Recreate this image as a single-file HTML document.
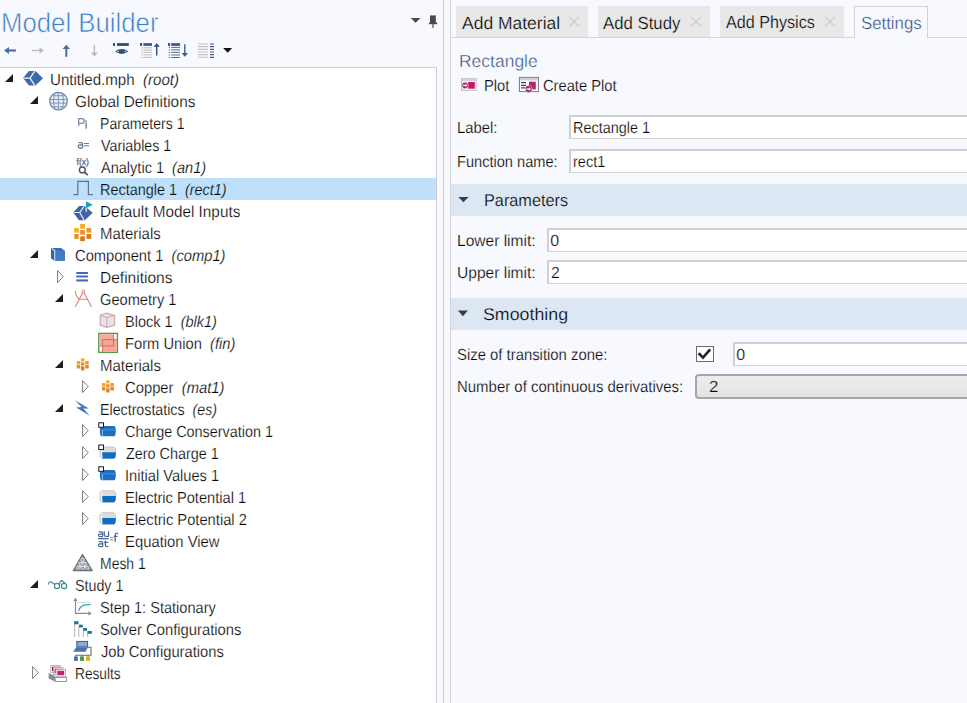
<!DOCTYPE html>
<html><head><meta charset="utf-8">
<style>
html,body{margin:0;padding:0;width:967px;height:703px;overflow:hidden;background:#f8f9fe;font-family:"Liberation Sans",sans-serif;color:#1e1e1e;}
.a{position:absolute;white-space:pre;}
.tx{position:absolute;white-space:pre;transform-origin:0 0;text-rendering:geometricPrecision;}
.tx i{font-style:italic;}
#left{position:absolute;left:0;top:0;width:443px;height:703px;background:#f8f9fe;}
#vl1{position:absolute;left:443px;top:0;width:1px;height:703px;background:#b6cde2;}
#vl2{position:absolute;left:450px;top:0;width:1px;height:703px;background:#d4d5dc;}
#tree{position:absolute;left:-1px;top:67px;width:436px;height:640px;background:#fff;border:1px solid #cdcdd1;}
.sel{position:absolute;left:0;width:436px;height:22px;background:#bfe0fb;}
.tab{position:absolute;top:6px;height:31px;background:#e8e8e8;}
#tabline{position:absolute;left:451px;top:37px;width:516px;height:1px;background:#d6d6da;}
.inp{position:absolute;background:#fff;border-top:2px solid #d0d0d2;border-left:2px solid #d0d0d2;border-bottom:1px solid #d4d4d6;box-sizing:border-box;}
.band{position:absolute;left:451px;width:516px;background:#dde6f3;}

</style></head><body>
<div id="left"></div>
<div id="tree"></div>
<div id="vl1"></div>
<div id="vl2"></div>
<div class="sel" style="top:178px"></div>
<svg style="position:absolute;left:0;top:0" width="967" height="703"><polygon points="5,82 13,74 13,82" fill="#1e1e1e"/><polygon points="30,104 38,96 38,104" fill="#1e1e1e"/><polygon points="30,258 38,250 38,258" fill="#1e1e1e"/><path d="M57.6 270.6 L63.2 276.6 L57.6 282.6 Z" fill="none" stroke="#7c7c7c" stroke-width="1"/><polygon points="55,302 63,294 63,302" fill="#1e1e1e"/><polygon points="55,368 63,360 63,368" fill="#1e1e1e"/><path d="M82.6 380.6 L88.2 386.6 L82.6 392.6 Z" fill="none" stroke="#7c7c7c" stroke-width="1"/><polygon points="55,412 63,404 63,412" fill="#1e1e1e"/><path d="M82.6 424.6 L88.2 430.6 L82.6 436.6 Z" fill="none" stroke="#7c7c7c" stroke-width="1"/><path d="M82.6 446.6 L88.2 452.6 L82.6 458.6 Z" fill="none" stroke="#7c7c7c" stroke-width="1"/><path d="M82.6 468.6 L88.2 474.6 L82.6 480.6 Z" fill="none" stroke="#7c7c7c" stroke-width="1"/><path d="M82.6 490.6 L88.2 496.6 L82.6 502.6 Z" fill="none" stroke="#7c7c7c" stroke-width="1"/><path d="M82.6 512.6 L88.2 518.6 L82.6 524.6 Z" fill="none" stroke="#7c7c7c" stroke-width="1"/><polygon points="30,588 38,580 38,588" fill="#1e1e1e"/><path d="M32.6 666.6 L38.2 672.6 L32.6 678.6 Z" fill="none" stroke="#7c7c7c" stroke-width="1"/></svg>
<div id="tabline"></div>
<div class="tab" style="left:456px;width:132px;"></div>
<div class="tab" style="left:598px;width:112px;"></div>
<div class="tab" style="left:720px;width:124px;"></div>
<div class="tab" style="left:854px;width:74px;top:6px;height:32px;background:#f8f9fd;border:1px solid #d0d2d8;border-bottom:none;box-sizing:border-box;"></div>
<svg class="a" style="left:0;top:0" width="967" height="40">
<path d="M569.5 17 L579 26.5 M579 17 L569.5 26.5" stroke="#cdcdcd" stroke-width="1.15"/>
<path d="M691 17 L701 26.5 M701 17 L691 26.5" stroke="#cdcdcd" stroke-width="1.15"/>
<path d="M825 17 L835 26.5 M835 17 L825 26.5" stroke="#cdcdcd" stroke-width="1.15"/>
</svg>
<div class="inp" style="left:569px;top:115px;width:400px;height:24px;"></div>
<div class="inp" style="left:569px;top:149px;width:400px;height:24px;"></div>
<div class="band" style="top:184px;height:32px"></div>
<div class="inp" style="left:547px;top:228px;width:422px;height:24px;"></div>
<div class="inp" style="left:547px;top:260px;width:422px;height:24px;"></div>
<div class="band" style="top:298px;height:32px"></div>
<div class="a" style="left:696px;top:346px;width:18px;height:16px;box-sizing:border-box;border:1px solid #6b6b6b;background:#fff"></div>
<div class="inp" style="left:733px;top:342px;width:236px;height:24px;"></div>
<div class="a" style="left:695px;top:374px;width:276px;height:25px;box-sizing:border-box;border:2px solid #a6a6a6;border-radius:4px;background:linear-gradient(#ededed,#e3e3e3);"></div>
<svg class="a" style="left:0;top:0" width="967" height="420">
<polygon points="458.3,197 468.6,197 463.45,202.3" fill="#3c3c46"/>
<polygon points="457.8,310.6 468,310.6 462.9,316.2" fill="#3c3c46"/>
<path d="M698.6 353.2 L703 357.6 L710.2 349.3" stroke="#262626" stroke-width="2.7" fill="none"/>
</svg>
<div class="tx" style="left:49.86px;top:73px;font-size:16px;line-height:16px;color:#000000;transform:scaleX(0.9422);-webkit-text-stroke:0.25px #fff;">Untitled.mph&nbsp; <i>(root)</i></div>
<div class="tx" style="left:74.84px;top:95px;font-size:16px;line-height:16px;color:#000000;transform:scaleX(0.9597);-webkit-text-stroke:0.25px #fff;">Global Definitions</div>
<div class="tx" style="left:99.92px;top:117px;font-size:16px;line-height:16px;color:#000000;transform:scaleX(0.8798);-webkit-text-stroke:0.25px #fff;">Parameters 1</div>
<div class="tx" style="left:100.8px;top:139px;font-size:16px;line-height:16px;color:#000000;transform:scaleX(0.891);-webkit-text-stroke:0.25px #fff;">Variables 1</div>
<div class="tx" style="left:100.8px;top:161px;font-size:16px;line-height:16px;color:#000000;transform:scaleX(0.9087);-webkit-text-stroke:0.25px #fff;">Analytic 1&nbsp; <i>(an1)</i></div>
<div class="tx" style="left:99.9px;top:183px;font-size:16px;line-height:16px;color:#000000;transform:scaleX(0.9007);-webkit-text-stroke:0.25px #bfe0fb;">Rectangle 1&nbsp; <i>(rect1)</i></div>
<div class="tx" style="left:99.84px;top:205px;font-size:16px;line-height:16px;color:#000000;transform:scaleX(0.9559);-webkit-text-stroke:0.25px #fff;">Default Model Inputs</div>
<div class="tx" style="left:99.86px;top:227px;font-size:16px;line-height:16px;color:#000000;transform:scaleX(0.9359);-webkit-text-stroke:0.25px #fff;">Materials</div>
<div class="tx" style="left:74.88px;top:249px;font-size:16px;line-height:16px;color:#000000;transform:scaleX(0.9198);-webkit-text-stroke:0.25px #fff;">Component 1&nbsp; <i>(comp1)</i></div>
<div class="tx" style="left:99.83px;top:271px;font-size:16px;line-height:16px;color:#000000;transform:scaleX(0.9699);-webkit-text-stroke:0.25px #fff;">Definitions</div>
<div class="tx" style="left:99.89px;top:293px;font-size:16px;line-height:16px;color:#000000;transform:scaleX(0.9146);-webkit-text-stroke:0.25px #fff;">Geometry 1</div>
<div class="tx" style="left:124.89px;top:315px;font-size:16px;line-height:16px;color:#000000;transform:scaleX(0.9071);-webkit-text-stroke:0.25px #fff;">Block 1&nbsp; <i>(blk1)</i></div>
<div class="tx" style="left:124.88px;top:337px;font-size:16px;line-height:16px;color:#000000;transform:scaleX(0.9195);-webkit-text-stroke:0.25px #fff;">Form Union&nbsp; <i>(fin)</i></div>
<div class="tx" style="left:99.86px;top:359px;font-size:16px;line-height:16px;color:#000000;transform:scaleX(0.9391);-webkit-text-stroke:0.25px #fff;">Materials</div>
<div class="tx" style="left:124.88px;top:381px;font-size:16px;line-height:16px;color:#000000;transform:scaleX(0.9245);-webkit-text-stroke:0.25px #fff;">Copper&nbsp; <i>(mat1)</i></div>
<div class="tx" style="left:99.91px;top:403px;font-size:16px;line-height:16px;color:#000000;transform:scaleX(0.8892);-webkit-text-stroke:0.25px #fff;">Electrostatics&nbsp; <i>(es)</i></div>
<div class="tx" style="left:124.9px;top:425px;font-size:16px;line-height:16px;color:#000000;transform:scaleX(0.8994);-webkit-text-stroke:0.25px #fff;">Charge Conservation 1</div>
<div class="tx" style="left:125.8px;top:447px;font-size:16px;line-height:16px;color:#000000;transform:scaleX(0.899);-webkit-text-stroke:0.25px #fff;">Zero Charge 1</div>
<div class="tx" style="left:124.89px;top:469px;font-size:16px;line-height:16px;color:#000000;transform:scaleX(0.9149);-webkit-text-stroke:0.25px #fff;">Initial Values 1</div>
<div class="tx" style="left:124.89px;top:491px;font-size:16px;line-height:16px;color:#000000;transform:scaleX(0.9137);-webkit-text-stroke:0.25px #fff;">Electric Potential 1</div>
<div class="tx" style="left:124.88px;top:513px;font-size:16px;line-height:16px;color:#000000;transform:scaleX(0.9198);-webkit-text-stroke:0.25px #fff;">Electric Potential 2</div>
<div class="tx" style="left:124.87px;top:535px;font-size:16px;line-height:16px;color:#000000;transform:scaleX(0.9267);-webkit-text-stroke:0.25px #fff;">Equation View</div>
<div class="tx" style="left:99.93px;top:557px;font-size:16px;line-height:16px;color:#000000;transform:scaleX(0.8725);-webkit-text-stroke:0.25px #fff;">Mesh 1</div>
<div class="tx" style="left:74.91px;top:579px;font-size:16px;line-height:16px;color:#000000;transform:scaleX(0.8923);-webkit-text-stroke:0.25px #fff;">Study 1</div>
<div class="tx" style="left:99.89px;top:601px;font-size:16px;line-height:16px;color:#000000;transform:scaleX(0.9103);-webkit-text-stroke:0.25px #fff;">Step 1: Stationary</div>
<div class="tx" style="left:99.88px;top:623px;font-size:16px;line-height:16px;color:#000000;transform:scaleX(0.9243);-webkit-text-stroke:0.25px #fff;">Solver Configurations</div>
<div class="tx" style="left:100.8px;top:645px;font-size:16px;line-height:16px;color:#000000;transform:scaleX(0.9203);-webkit-text-stroke:0.25px #fff;">Job Configurations</div>
<div class="tx" style="left:74.94px;top:667px;font-size:16px;line-height:16px;color:#000000;transform:scaleX(0.8558);-webkit-text-stroke:0.25px #fff;">Results</div>
<div class="tx" style="left:0.93px;top:9px;font-size:27.5px;line-height:27.5px;color:#3a80c6;transform:scaleX(0.9367);-webkit-text-stroke:0.6px #f8f9fe;">Model Builder</div>
<div class="tx" style="left:461.5px;top:15px;font-size:17.5px;line-height:17.5px;color:#000000;transform:scaleX(0.999);-webkit-text-stroke:0.25px #e8e8e8;">Add Material</div>
<div class="tx" style="left:603.4px;top:15px;font-size:17.5px;line-height:17.5px;color:#000000;transform:scaleX(0.958);-webkit-text-stroke:0.25px #e8e8e8;">Add Study</div>
<div class="tx" style="left:725.9px;top:14px;font-size:17.5px;line-height:17.5px;color:#000000;transform:scaleX(0.9219);-webkit-text-stroke:0.25px #e8e8e8;">Add Physics</div>
<div class="tx" style="left:860.74px;top:15px;font-size:17.5px;line-height:17.5px;color:#33508a;transform:scaleX(0.9597);-webkit-text-stroke:0.3px #f8f9fe;">Settings</div>
<div class="tx" style="left:459.2px;top:53px;font-size:17.5px;line-height:17.5px;color:#34507e;transform:scaleX(0.9987);-webkit-text-stroke:0.35px #f8f9fe;">Rectangle</div>
<div class="tx" style="left:484.28px;top:79px;font-size:16px;line-height:16px;color:#000000;transform:scaleX(0.9185);-webkit-text-stroke:0.25px #f8f9fe;">Plot</div>
<div class="tx" style="left:543.08px;top:79px;font-size:16px;line-height:16px;color:#000000;transform:scaleX(0.919);-webkit-text-stroke:0.25px #f8f9fe;">Create Plot</div>
<div class="tx" style="left:456.97px;top:121px;font-size:16px;line-height:16px;color:#000000;transform:scaleX(0.9268);-webkit-text-stroke:0.25px #f8f9fe;">Label:</div>
<div class="tx" style="left:457.09px;top:155px;font-size:16px;line-height:16px;color:#000000;transform:scaleX(0.912);-webkit-text-stroke:0.25px #f8f9fe;">Function name:</div>
<div class="tx" style="left:572.7px;top:121px;font-size:16px;line-height:16px;color:#000000;transform:scaleX(0.9012);-webkit-text-stroke:0.25px #fff;">Rectangle 1</div>
<div class="tx" style="left:572.69px;top:155px;font-size:16px;line-height:16px;color:#000000;transform:scaleX(0.9059);-webkit-text-stroke:0.25px #fff;">rect1</div>
<div class="tx" style="left:483.64px;top:192px;font-size:17px;line-height:17px;color:#000000;transform:scaleX(0.957);-webkit-text-stroke:0.25px #dde6f3;">Parameters</div>
<div class="tx" style="left:456.53px;top:234px;font-size:16px;line-height:16px;color:#000000;transform:scaleX(0.9709);-webkit-text-stroke:0.25px #f8f9fe;">Lower limit:</div>
<div class="tx" style="left:550.3px;top:234px;font-size:16px;line-height:16px;color:#000000;transform:scaleX(1.0);-webkit-text-stroke:0.25px #fff;">0</div>
<div class="tx" style="left:456.83px;top:266px;font-size:16px;line-height:16px;color:#000000;transform:scaleX(0.9722);-webkit-text-stroke:0.25px #f8f9fe;">Upper limit:</div>
<div class="tx" style="left:550.51px;top:266px;font-size:16px;line-height:16px;color:#000000;transform:scaleX(0.9857);-webkit-text-stroke:0.25px #fff;">2</div>
<div class="tx" style="left:482.75px;top:306px;font-size:17px;line-height:17px;color:#000000;transform:scaleX(1.0468);-webkit-text-stroke:0.25px #dde6f3;">Smoothing</div>
<div class="tx" style="left:456.87px;top:348px;font-size:16px;line-height:16px;color:#000000;transform:scaleX(0.9287);-webkit-text-stroke:0.25px #f8f9fe;">Size of transition zone:</div>
<div class="tx" style="left:736.2px;top:348px;font-size:16px;line-height:16px;color:#000000;transform:scaleX(1.0);-webkit-text-stroke:0.25px #fff;">0</div>
<div class="tx" style="left:456.86px;top:380px;font-size:16px;line-height:16px;color:#000000;transform:scaleX(0.935);-webkit-text-stroke:0.25px #f8f9fe;">Number of continuous derivatives:</div>
<div class="tx" style="left:709.24px;top:380px;font-size:16px;line-height:16px;color:#000000;transform:scaleX(1.0571);-webkit-text-stroke:0.25px #e8e8e8;">2</div>
<svg style="position:absolute;left:0;top:0" width="967" height="703" viewBox="0 0 967 703"><polygon points="23,78 29,71 35.5,71 43,78.3 35.5,85.5 29,85.5" fill="#3f68a6"/><path d="M23.5 78.2 H30 L34.8 71.2 M30 78.2 L34.8 85.3" stroke="#eaf2fc" stroke-width="1.3" fill="none"/><circle cx="58.5" cy="101.1" r="8.8" fill="#e3edf8" stroke="#6b82a8" stroke-width="1.2"/><path d="M58.4 92.4 V109.8 M55.5 92.6 Q51.3 101 55.5 109.6 M61.5 92.6 Q65.7 101 61.5 109.6 M52.3 95.7 H64.7 M49.8 99.5 H67.2 M49.8 103.1 H67.2 M52.3 106.8 H64.7" stroke="#7d90b0" stroke-width="0.9" fill="none"/><path d="M78.7 126 V118.6 H81.8 Q84.3 118.6 84.3 121 Q84.3 123.4 81.8 123.4 H78.7" stroke="#7387a8" stroke-width="1.2" fill="none"/><rect x="85.3" y="120.3" width="1.7" height="1.5" fill="#8593ad"/><rect x="85.3" y="122.6" width="1.7" height="6" fill="#8593ad"/><path d="M78.5 142.6 H81.2 Q82.6 142.6 82.6 144 V148 M82.6 145 H79.6 Q78.3 145 78.3 146.5 Q78.3 148 79.6 148 H82.6" stroke="#6b7d98" stroke-width="1.3" fill="none"/><path d="M84 143.5 H89 M84 145.7 H89" stroke="#6b7d98" stroke-width="1.1"/><text x="76.5" y="165.4" font-family="Liberation Sans" font-size="8.8" fill="#4f6488" stroke="#4f6488" stroke-width="0.25" textLength="12.4" lengthAdjust="spacingAndGlyphs">f(x)</text><circle cx="82.3" cy="169.9" r="2.9" fill="none" stroke="#50565e" stroke-width="1.45"/><path d="M84.5 172.1 L87.8 175.2" stroke="#50565e" stroke-width="1.8"/><path d="M73.2 194.6 H77.8 V181.4 H88.4 V194.6 H92.8" stroke="#5b7492" stroke-width="1.2" fill="none"/><polygon points="73.2,212.4 79.2,206 84.5,206 92.7,212.7 85,220.3 79,220.3" fill="#3f64a3"/><path d="M73.6 212.5 H79.8 L84 206.3 M79.8 212.5 L84 220" stroke="#e6eefa" stroke-width="1.2" fill="none"/><polygon points="86,201.2 92.8,204.8 86,208.2" fill="#17a2b8"/><rect x="85.3" y="207.8" width="1.8" height="4" fill="#b9cde6"/><rect x="74.2" y="228" width="4.5" height="4.6" fill="#f5ad1f"/><rect x="74.2" y="234" width="4.5" height="4.9" fill="#ef8f23"/><rect x="80.2" y="224" width="4.7" height="4.6" fill="#f6a81e"/><rect x="80.2" y="230.1" width="4.7" height="4.6" fill="#f08b28"/><rect x="80.2" y="236.3" width="4.7" height="4.8" fill="#d97a1a"/><rect x="86.4" y="228" width="4.9" height="4.6" fill="#f29424"/><rect x="86.4" y="234" width="4.9" height="4.9" fill="#d8801c"/><polygon points="51,248 61,248 64.8,250.7 64.8,260.7 55,260.7 51,258.3" fill="#3a6cb3"/><polygon points="55,250.7 64.8,250.7 64.8,260.7 55,260.7" fill="#3f7cc2"/><polygon points="51,248 55,250.7 55,260.7 51,258.3" fill="#3764a6"/><path d="M51.8 248.5 L54.7 250.6 V260.5" stroke="#cfe3f7" stroke-width="1.1" fill="none"/><rect x="76.3" y="272" width="11.6" height="2" fill="#3e6db2"/><rect x="76.3" y="275.5" width="11.6" height="2" fill="#3e6db2"/><rect x="76.3" y="279.4" width="11.6" height="2.1" fill="#3e6db2"/><path d="M75.3 306.7 L82.9 292.6 M84 292.6 L91.5 307 M79 299.3 H87.7 M75.3 291 Q75.6 296.5 79.5 299.5" stroke="#d8856f" stroke-width="1.1" fill="none"/><circle cx="83.4" cy="291.3" r="1.4" fill="none" stroke="#d8856f" stroke-width="1"/><polygon points="100.2,315.3 106.8,313.1 114.7,315.5 114.7,325 106.8,327.5 100.2,325" fill="#e7e3ea" stroke="#cf9f9f" stroke-width="1.1"/><path d="M100.2 315.3 L106.8 317.5 L114.7 315.5 M106.8 317.5 V327.5" stroke="#d2a5a2" stroke-width="1" fill="none"/><rect x="98.8" y="333.4" width="18.6" height="19" fill="#fff" stroke="#569a50" stroke-width="1.4"/><rect x="99.6" y="334.2" width="14.3" height="11.8" fill="#f5ab98"/><rect x="102.2" y="339.2" width="14.6" height="12.6" fill="#f6a896"/><path d="M113.6 334.4 V346 H100 M102.6 351.8 V339.6 H116.5" stroke="#cc6f5c" stroke-width="0.95" fill="none"/><rect x="76.7" y="361.09999999999997" width="3.5" height="3.4" rx="0.5" fill="#f3a524"/><rect x="76.7" y="365.09999999999997" width="3.5" height="3.4" rx="0.5" fill="#ec8d2a"/><rect x="80.9" y="358.2" width="3.5" height="3.4" rx="0.5" fill="#f2b11f"/><rect x="80.9" y="362.2" width="3.5" height="3.4" rx="0.5" fill="#ef8b26"/><rect x="80.9" y="366.2" width="3.5" height="4.2" rx="0.6" fill="#d98428"/><rect x="85.2" y="361.09999999999997" width="3.5" height="3.4" rx="0.5" fill="#f09a2a"/><rect x="85.2" y="365.09999999999997" width="3.5" height="3.4" rx="0.5" fill="#de8628"/><rect x="101.9" y="383.09999999999997" width="3.5" height="3.4" rx="0.5" fill="#f3a524"/><rect x="101.9" y="387.09999999999997" width="3.5" height="3.4" rx="0.5" fill="#ec8d2a"/><rect x="106.10000000000001" y="380.2" width="3.5" height="3.4" rx="0.5" fill="#f2b11f"/><rect x="106.10000000000001" y="384.2" width="3.5" height="3.4" rx="0.5" fill="#ef8b26"/><rect x="106.10000000000001" y="388.2" width="3.5" height="4.2" rx="0.6" fill="#d98428"/><rect x="110.4" y="383.09999999999997" width="3.5" height="3.4" rx="0.5" fill="#f09a2a"/><rect x="110.4" y="387.09999999999997" width="3.5" height="3.4" rx="0.5" fill="#de8628"/><polygon points="75,400.2 88.8,408.4 83.3,408.6 89.8,415.8 76.1,407.4 81.6,407.1" fill="#4277b8"/><path d="M101.8 426.0 H113.8 Q115.8 426.0 115.8 430.8 Q115.8 436.3 113.8 436.3 H101.8 Q99.8 436.3 99.8 430.8 Q99.8 426.0 101.8 426.0 Z" fill="#1e6fc2"/><path d="M102.8 429.8 H115.3" stroke="#5a9ad8" stroke-width="0.8"/><path d="M102.39999999999999 429.8 V436.0" stroke="#9cc6ee" stroke-width="0.9"/><rect x="98.8" y="422.8" width="4.7" height="4.5" fill="#fff" stroke="#1a1a1a" stroke-width="1"/><path d="M101.8 447.0 H113.8 Q115.8 447.0 115.8 452.5 Q115.8 458.5 113.8 458.5 H101.8 Q99.8 458.5 99.8 452.7 Q99.8 447.0 101.8 447.0 Z" fill="#dcdcde" stroke="#b8b8bc" stroke-width="0.7"/><path d="M102.3 452.2 H115.8 Q115.8 458.5 113.8 458.5 H102.3 Z" fill="#0f6cc4"/><path d="M102.0 447.5 Q100.3 452.7 102.0 458.0" stroke="#f4f4f6" stroke-width="1.2" fill="none"/><rect x="98.8" y="445.0" width="4.7" height="4.5" fill="#fff" stroke="#1a1a1a" stroke-width="1"/><path d="M101.8 470.0 H113.8 Q115.8 470.0 115.8 474.8 Q115.8 480.3 113.8 480.3 H101.8 Q99.8 480.3 99.8 474.8 Q99.8 470.0 101.8 470.0 Z" fill="#1e6fc2"/><path d="M102.8 473.8 H115.3" stroke="#5a9ad8" stroke-width="0.8"/><path d="M102.39999999999999 473.8 V480.0" stroke="#9cc6ee" stroke-width="0.9"/><rect x="98.8" y="466.8" width="4.7" height="4.5" fill="#fff" stroke="#1a1a1a" stroke-width="1"/><path d="M101.8 490.7 H113.8 Q115.8 490.7 115.8 496.2 Q115.8 502.2 113.8 502.2 H101.8 Q99.8 502.2 99.8 496.4 Q99.8 490.7 101.8 490.7 Z" fill="#dcdcde" stroke="#b8b8bc" stroke-width="0.7"/><path d="M102.3 495.9 H115.8 Q115.8 502.2 113.8 502.2 H102.3 Z" fill="#0f6cc4"/><path d="M102.0 491.2 Q100.3 496.4 102.0 501.7" stroke="#f4f4f6" stroke-width="1.2" fill="none"/><path d="M101.8 512.7 H113.8 Q115.8 512.7 115.8 518.2 Q115.8 524.2 113.8 524.2 H101.8 Q99.8 524.2 99.8 518.4000000000001 Q99.8 512.7 101.8 512.7 Z" fill="#dcdcde" stroke="#b8b8bc" stroke-width="0.7"/><path d="M102.3 517.9000000000001 H115.8 Q115.8 524.2 113.8 524.2 H102.3 Z" fill="#0f6cc4"/><path d="M102.0 513.2 Q100.3 518.4000000000001 102.0 523.7" stroke="#f4f4f6" stroke-width="1.2" fill="none"/><path d="M98.7 531.9 H101.4 Q102.7 531.9 102.7 533.2 V536.6 M102.7 534 H99.9 Q98.5 534 98.5 535.3 Q98.5 536.5 99.9 536.5 H102.7" stroke="#4d6b96" stroke-width="1.25" fill="none"/><path d="M104.3 531.2 V534.9 Q104.3 536.4 105.8 536.4 H108.6 M108.6 531.2 V536.8" stroke="#4d6b96" stroke-width="1.25" fill="none"/><rect x="98" y="538" width="10.6" height="1.3" fill="#4d6b96"/><path d="M98.7 541.6 H101.4 Q102.7 541.6 102.7 542.9 V546.8 M102.7 543.9 H99.9 Q98.5 543.9 98.5 545.2 Q98.5 546.6 99.9 546.6 H102.7" stroke="#4d6b96" stroke-width="1.25" fill="none"/><path d="M105.4 540.6 V545.2 Q105.4 546.5 106.8 546.5 H108.2 M103.9 542.3 H108.2" stroke="#4d6b96" stroke-width="1.25" fill="none"/><path d="M110 537.7 H113.2 M110 539.9 H113.2" stroke="#6e7f97" stroke-width="0.9"/><path d="M117.9 533.7 Q117 533 116.1 533.3 Q115.2 533.7 115.2 535 V541.8 M113.6 536.3 H117.6" stroke="#4d6b96" stroke-width="1.3" fill="none"/><polygon points="82.5,554.5 92.2,570.5 73.4,570.5" fill="#959da6"/><path d="M80.22 558.50 H84.92 M78.10 570.50 L84.92 558.50 M78.10 570.50 L75.68 566.50 M77.95 562.50 H87.35 M82.80 570.50 L87.35 562.50 M82.80 570.50 L77.95 562.50 M75.68 566.50 H89.78 M87.50 570.50 L89.78 566.50 M87.50 570.50 L80.22 558.50" stroke="#e9edf1" stroke-width="0.8" fill="none"/><polygon points="82.5,554.5 92.2,570.5 73.4,570.5" fill="none" stroke="#6a7179" stroke-width="1.3" stroke-linejoin="round"/><path d="M48.6 584.6 Q48.6 580.8 51.5 582.2 L54.6 584.3" stroke="#3e8d92" stroke-width="1.2" fill="none"/><circle cx="57" cy="586" r="2.6" fill="none" stroke="#3e8d92" stroke-width="1.2"/><circle cx="64.1" cy="586" r="2.6" fill="none" stroke="#3e8d92" stroke-width="1.2"/><path d="M59.4 585 Q59.8 580.6 61.4 580.6 Q62.6 580.8 64.8 583" stroke="#3e8d92" stroke-width="1.2" fill="none"/><path d="M75.5 599 V613.4 H90.5" stroke="#8a8c90" stroke-width="1.2" fill="none"/><polygon points="75.5,597.6 73.4,601 77.6,601" fill="#8a8c90"/><polygon points="91.8,613.4 88.4,611.3 88.4,615.5" fill="#8a8c90"/><path d="M77.3 602.5 H90.6" stroke="#b4b6ba" stroke-width="0.8" stroke-dasharray="1.2 0.6"/><path d="M78.6 610.7 Q80.5 605.8 85 604.9 Q88 604.4 90.5 604.6" stroke="#3aa2b2" stroke-width="1.3" fill="none"/><path d="M74.6 624 V637 M78.8 627 V637 M83.4 630.6 V637 M87.6 633.6 V637" stroke="#a9aaae" stroke-width="0.9"/><rect x="74.1" y="621.2" width="4.4" height="3.1" fill="#177a93"/><rect x="78.9" y="624.7" width="3.9" height="2.8" fill="#177a93"/><rect x="83.1" y="628" width="3.9" height="2.8" fill="#177a93"/><rect x="87.4" y="631" width="4.4" height="2.8" fill="#177a93"/><path d="M87.8 647.2 H91 V655.2 H75.8 V657" stroke="#6b6b6f" stroke-width="1.1" fill="none"/><path d="M82 655.2 V657 M88 655.2 V657" stroke="#6b6b6f" stroke-width="1"/><rect x="76.8" y="641.4" width="10.8" height="5.6" fill="#8ea9cf" stroke="#3b5b8c" stroke-width="1"/><polygon points="76.4,647.2 87.9,647.2 85.6,651.7 73,651.7" fill="#4b72b2"/><rect x="74" y="656.5" width="3.9" height="4.4" fill="#4a78b0"/><rect x="80" y="656.5" width="4" height="4.4" fill="#4c9a45"/><rect x="86" y="656.5" width="4" height="4.4" fill="#f2ab22"/><polygon points="48.6,673 55,676 55,681.5 48.6,678.5" fill="#8a8c8e"/><rect x="50.8" y="665.4" width="9.4" height="7" fill="#fbe8f1" stroke="#a9a9ac" stroke-width="0.8"/><rect x="52" y="666.8" width="7" height="4.3" fill="#8e2058"/><rect x="53.4" y="667.4" width="9.6" height="7" fill="#fbe8f1" stroke="#a9a9ac" stroke-width="0.8"/><rect x="54.6" y="668.8" width="7.2" height="4.3" fill="#a32165"/><rect x="55.9" y="669.4" width="9.7" height="7.3" fill="#fde9f2" stroke="#a9a9ac" stroke-width="0.8"/><rect x="57.3" y="670.8" width="6.8" height="4.4" fill="#c0246f"/><rect x="55.2" y="677.6" width="11.4" height="3.9" fill="#fff" stroke="#8d8d90" stroke-width="0.9"/><path d="M8 50.5 H15.9" stroke="#4a6fa3" stroke-width="2.2"/><polygon points="4,50.5 9,47 9,54" fill="#4a6fa3"/><path d="M32 50.5 H40" stroke="#b9b9bb" stroke-width="1.4"/><polygon points="43.8,50.5 39.5,47.2 39.5,53.8" fill="#b9b9bb"/><path d="M66.3 48 V56.8" stroke="#4a6fa3" stroke-width="2"/><polygon points="66.3,44.8 62.6,49 70,49" fill="#4a6fa3"/><path d="M94.4 44.8 V53" stroke="#b9b9bb" stroke-width="1.4"/><polygon points="94.4,56.4 91,52.4 97.8,52.4" fill="#b9b9bb"/><rect x="113" y="43.1" width="2.1" height="2.8" fill="#2f4c78"/><rect x="117" y="43.1" width="11.8" height="2.8" fill="#2f4c78"/><path d="M115.1 51.5 Q121.7 46.6 128.3 51.5 Q121.7 56.4 115.1 51.5 Z" fill="#2f4c78"/><circle cx="118" cy="51.5" r="0.8" fill="#d8e4f2"/><circle cx="125.3" cy="51.5" r="0.8" fill="#d8e4f2"/><rect x="140" y="43.1" width="2.1" height="2.8" fill="#2f4c78"/><rect x="143.4" y="43.1" width="8.6" height="2.8" fill="#3a5c8c"/><path d="M143.4 47.8 H152 M143.4 50.1 H152 M143.4 52.4 H152 M143.4 54.9 H152 M143.4 57.4 H152" stroke="#bdbdbf" stroke-width="1"/><path d="M141.5 47.8 H142.3 M141.5 50.1 H142.3 M141.5 52.4 H142.3 M141.5 54.9 H142.3 M141.5 57.4 H142.3" stroke="#8a96a8" stroke-width="1"/><path d="M156.7 46 V55.6" stroke="#2f4c78" stroke-width="1.4"/><polygon points="156.7,43.3 153.5,46.8 159.9,46.8" fill="#2f4c78"/><rect x="168" y="43.1" width="2.1" height="2.8" fill="#2f4c78"/><rect x="171.2" y="43.1" width="8.9" height="2.8" fill="#3a5c8c"/><path d="M171.2 47.4 H180 M171.2 49.9 H180 M171.2 52.4 H180 M171.2 55 H180 M171.2 57.5 H180" stroke="#4f6c96" stroke-width="1"/><path d="M168.8 47.4 H169.8 M168.8 49.9 H169.8 M168.8 52.4 H169.8 M168.8 55 H169.8 M168.8 57.5 H169.8" stroke="#2f4c78" stroke-width="1"/><path d="M184.8 44.3 V54" stroke="#3a5c8c" stroke-width="1.4"/><polygon points="184.8,56.8 181.6,53.1 188,53.1" fill="#3a5c8c"/><path d="M198 44 H208 M198 46.6 H208 M198 49.4 H208 M198 52 H208 M198 54.6 H208 M198 57.3 H208" stroke="#c2c2c4" stroke-width="1.1"/><path d="M210 44 H214 M210 46.6 H214 M210 49.4 H214 M210 52 H214 M210 54.6 H214 M210 57.3 H214" stroke="#3f5f8e" stroke-width="1.2"/><polygon points="223.2,48.1 232.1,48.1 227.65,52.8" fill="#111"/><polygon points="410.7,18 420.5,18 415.6,22.8" fill="#4a4a4a"/><rect x="430" y="15.4" width="5.8" height="7.6" fill="#4a4a4a"/><rect x="428.9" y="22.6" width="8.3" height="1.6" fill="#4a4a4a"/><rect x="432.3" y="24" width="1.3" height="3.8" fill="#5a5a5a"/><rect x="461.5" y="78.7" width="14.6" height="11.6" fill="#fdf5f9" stroke="#b4b4b6" stroke-width="0.9"/><rect x="461.5" y="78.7" width="14.6" height="2.4" fill="#d2d2d4"/><rect x="468.2" y="82" width="6.6" height="6.7" fill="#c2186b"/><circle cx="465.1" cy="85.4" r="3.1" fill="#8c1a55" stroke="#f6d8e8" stroke-width="0.6"/><path d="M463.1 85.4 H465.6" stroke="#fff" stroke-width="1.3"/><polygon points="465.2,83.5 467.4,85.4 465.2,87.3" fill="#fff"/><rect x="519.4" y="77.4" width="19" height="14.2" fill="#fff" stroke="#7b7b7e" stroke-width="1"/><rect x="519.9" y="77.9" width="18" height="2.6" fill="#d2d2d4"/><path d="M521 82.6 H526 M521 85.4 H526 M521 87.8 H525" stroke="#2f4572" stroke-width="1.2"/><rect x="529" y="81.7" width="6.8" height="7.7" fill="#c21e6c"/><circle cx="528.7" cy="89" r="3.4" fill="#8a1a55" stroke="#f6d8e8" stroke-width="0.6"/><path d="M526.5 89 H529.2" stroke="#fff" stroke-width="1.3"/><polygon points="528.8,87 531.1,89 528.8,91" fill="#fff"/></svg>

</body></html>
